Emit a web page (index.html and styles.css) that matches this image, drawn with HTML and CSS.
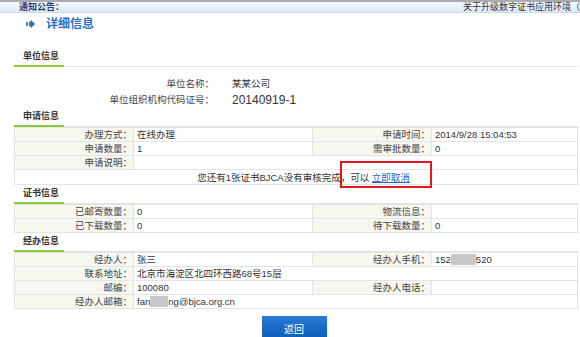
FILE: index.html
```html
<!DOCTYPE html>
<html>
<head>
<meta charset="utf-8">
<link rel="stylesheet" href="styles.css">
</head>
<body>

<div class="topbar">
  <span class="notice-label">通知公告：</span>
  <span class="notice-text">关于升级数字证书应用环境（驱动程序）的通知</span>
</div>

<div class="page-title">
  <svg class="title-icon" width="9" height="8" viewBox="0 0 9 8">
    <rect x="0" y="2" width="2" height="4" fill="#3d86e0"/>
    <polygon points="3,1.5 5,1.5 5,0 9,4 5,8 5,6.5 3,6.5" fill="#2b6fc7"/>
  </svg>
  <span>详细信息</span>
</div>

<div class="content">

  <h3 class="sec-title first"><span>单位信息</span></h3>
  <div class="unit-info">
    <div class="unit-label">单位名称：</div>
    <div class="unit-value">某某公司</div>
    <div class="unit-label">单位组织机构代码证号：</div>
    <div class="unit-value big">20140919-1</div>
  </div>

  <h3 class="sec-title"><span>申请信息</span></h3>
  <table class="info-table">
    <colgroup>
      <col class="c-label"><col class="c-value"><col class="c-label"><col>
    </colgroup>
    <tr>
      <td class="label">办理方式：</td><td>在线办理</td>
      <td class="label">申请时间：</td><td>2014/9/28 15:04:53</td>
    </tr>
    <tr>
      <td class="label">申请数量：</td><td>1</td>
      <td class="label">需审批数量：</td><td>0</td>
    </tr>
    <tr>
      <td class="label">申请说明：</td><td colspan="3"></td>
    </tr>
    <tr>
      <td class="notice" colspan="4">您还有1张证书BJCA没有审核完成<span class="highlight">，可以 <a href="#">立即取消</a></span></td>
    </tr>
  </table>

  <h3 class="sec-title"><span>证书信息</span></h3>
  <table class="info-table">
    <colgroup>
      <col class="c-label"><col class="c-value"><col class="c-label"><col>
    </colgroup>
    <tr>
      <td class="label">已邮寄数量：</td><td>0</td>
      <td class="label">物流信息：</td><td></td>
    </tr>
    <tr>
      <td class="label">已下载数量：</td><td>0</td>
      <td class="label">待下载数量：</td><td>0</td>
    </tr>
  </table>

  <h3 class="sec-title"><span>经办信息</span></h3>
  <table class="info-table">
    <colgroup>
      <col class="c-label"><col class="c-value"><col class="c-label"><col>
    </colgroup>
    <tr>
      <td class="label">经办人：</td><td>张三</td>
      <td class="label">经办人手机：</td><td>152<span class="mask"></span>520</td>
    </tr>
    <tr>
      <td class="label">联系地址：</td><td colspan="3">北京市海淀区北四环西路68号15层</td>
    </tr>
    <tr>
      <td class="label">邮编：</td><td>100080</td>
      <td class="label">经办人电话：</td><td></td>
    </tr>
    <tr>
      <td class="label">经办人邮箱：</td><td colspan="3">fan<span class="mask short"></span>ng@bjca.org.cn</td>
    </tr>
  </table>

  <div class="actions">
    <button class="btn-back">返回</button>
  </div>

</div>

</body>
</html>
```

FILE: styles.css
```css
body        { margin:0; background:#fff; color:#333;
              font-family:"Liberation Sans","Noto Sans CJK SC",sans-serif; font-size:9px }

/* notice bar */
.topbar     { height:10px; border-top:2px solid #a9abae; border-bottom:1px solid #c7daf0;
              background:linear-gradient(#f4f8fd,#dde9f7); padding-left:19px;
              display:flex; align-items:center; white-space:nowrap; overflow:hidden; line-height:10px }
.notice-label { font-weight:bold; color:#1f3c72 }
.notice-text  { margin-left:399px; color:#333 }

/* page title */
.page-title { display:flex; align-items:center; height:16px; padding:3px 0 0 26px;
              font-size:12px; font-weight:bold; color:#2b6fc7; line-height:16px }
.title-icon { margin-right:11px }

.content    { padding:0 2px 0 14px }

/* section headings */
.sec-title  { display:flex; margin:2px 0 0; font-size:9px; font-weight:bold; line-height:12px;
              color:#333; border-bottom:1px solid #e3e3e3 }
.sec-title.first { margin-top:18px }
.sec-title span { padding:0 5px 3px 9px; border-bottom:2px solid #8dc63f; margin-bottom:-1px }

/* unit info */
.unit-info  { display:grid; grid-template-columns:200px auto; column-gap:18px;
              margin:9px 0 2px; line-height:16px; font-size:9.5px }
.unit-label { text-align:right; color:#444 }
.unit-value { color:#333 }
.unit-value.big { font-size:12px }

/* tables */
.info-table { width:100%; border-collapse:collapse; table-layout:fixed; font-size:9.5px }
.c-label    { width:119px }
.c-value    { width:179px }
.info-table td { border:1px solid #e4e4e4; height:13px; line-height:13px; padding:0 3px;
                 white-space:nowrap; color:#333 }
.info-table td.label { background:#f6f7ef; text-align:right; padding:0 1px 0 0; color:#444 }
.info-table td.notice { text-align:center; padding-left:18px; height:14px }

.info-table a { color:#2366c0; text-decoration:underline }
.highlight  { position:relative }
.highlight::after { content:""; position:absolute; left:-1px; right:-22px; top:-11px; bottom:-5px;
                    border:2px solid #e8141b }

.mask       { display:inline-block; width:25px; height:11px; background:#c8c8c8; vertical-align:-2px }
.mask.short { width:18px }

/* button */
.actions    { display:flex; justify-content:center; margin-top:7px }
.btn-back   { width:65px; height:24px; border:0; padding:0; margin-right:4px;
              background:linear-gradient(#2a7ad6,#0c5bb6); color:#fff;
              font-family:"Noto Sans CJK SC",sans-serif; font-size:10px }
```
